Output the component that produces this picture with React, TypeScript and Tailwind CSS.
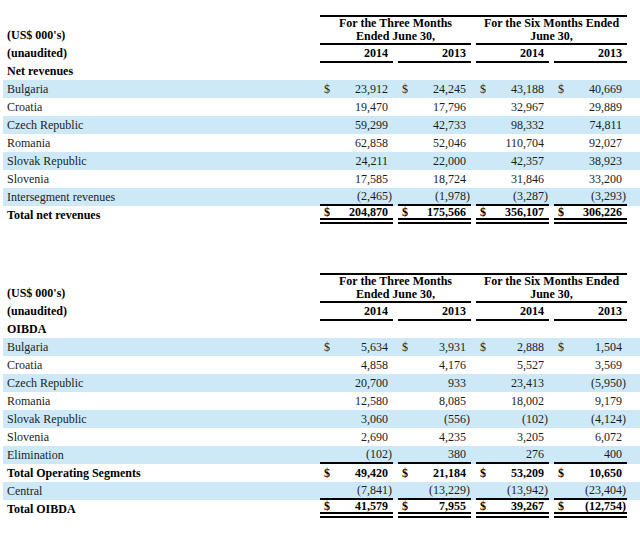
type Row = {
  label: string;
  values: string[];
  bold?: boolean;
  shaded?: boolean;
  dollar?: boolean;
  lineBelow?: boolean;
  doubleBelow?: boolean;
  height?: string;
};

const revenues: Row[] = [
  { label: "Bulgaria", values: ["23,912", "24,245", "43,188", "40,669"], shaded: true, dollar: true },
  { label: "Croatia", values: ["19,470", "17,796", "32,967", "29,889"] },
  { label: "Czech Republic", values: ["59,299", "42,733", "98,332", "74,811"], shaded: true },
  { label: "Romania", values: ["62,858", "52,046", "110,704", "92,027"] },
  { label: "Slovak Republic", values: ["24,211", "22,000", "42,357", "38,923"], shaded: true },
  { label: "Slovenia", values: ["17,585", "18,724", "31,846", "33,200"] },
  { label: "Intersegment revenues", values: ["(2,465)", "(1,978)", "(3,287)", "(3,293)"], shaded: true, lineBelow: true },
  { label: "Total net revenues", values: ["204,870", "175,566", "356,107", "306,226"], bold: true, dollar: true, doubleBelow: true },
];

const oibda: Row[] = [
  { label: "Bulgaria", values: ["5,634", "3,931", "2,888", "1,504"], shaded: true, dollar: true },
  { label: "Croatia", values: ["4,858", "4,176", "5,527", "3,569"] },
  { label: "Czech Republic", values: ["20,700", "933", "23,413", "(5,950)"], shaded: true },
  { label: "Romania", values: ["12,580", "8,085", "18,002", "9,179"] },
  { label: "Slovak Republic", values: ["3,060", "(556)", "(102)", "(4,124)"], shaded: true },
  { label: "Slovenia", values: ["2,690", "4,235", "3,205", "6,072"] },
  { label: "Elimination", values: ["(102)", "380", "276", "400"], shaded: true, lineBelow: true },
  { label: "Total Operating Segments", values: ["49,420", "21,184", "53,209", "10,650"], bold: true, dollar: true },
  { label: "Central", values: ["(7,841)", "(13,229)", "(13,942)", "(23,404)"], shaded: true, lineBelow: true },
  { label: "Total OIBDA", values: ["41,579", "7,955", "39,267", "(12,754)"], bold: true, dollar: true, doubleBelow: true },
];

function Amount({ value }: { value: string }) {
  const negative = value.startsWith("(");
  return <span className={negative ? "" : "pr-[4px]"}>{value}</span>;
}

function TableRow({ row }: { row: Row }) {
  const cellBorder = row.doubleBelow
    ? "border-b-[6px] border-double border-black"
    : row.lineBelow
    ? "border-b-2 border-black"
    : "";
  return (
    <div
      className={`flex ${row.height ?? "h-[18px]"} ${row.shaded ? "bg-[#cde9f8]" : ""} ${
        row.bold ? "font-bold text-black" : "text-[#1c1c1c]"
      }`}
    >
      <div className="flex w-[317px] items-center pl-[4px]">{row.label}</div>
      <div className="flex gap-[5px]">
        {row.values.map((v, i) => (
          <div
            key={i}
            className={`flex w-[73px] items-center justify-between pl-[4px] pr-[1px] ${cellBorder}`}
          >
            <span>{row.dollar ? "$" : ""}</span>
            <Amount value={v} />
          </div>
        ))}
      </div>
    </div>
  );
}

function Table({ title, rows }: { title: string; rows: Row[] }) {
  return (
    <div>
      <div className="flex h-[80px]">
        <div className="flex w-[317px] flex-col justify-end font-bold text-black">
          <div className="flex h-[18px] items-center pl-[4px]">(US$ 000's)</div>
          <div className="flex h-[18px] items-center pl-[4px]">(unaudited)</div>
          <div className="flex h-[18px] items-center pl-[4px]">{title}</div>
        </div>
        <div className="mt-[15px] w-[307px] border-t-2 border-black text-[12px] font-bold leading-[13px] text-black">
          <div className="flex gap-[5px]">
            <div className="w-[151px] border-b-2 border-black text-center">
              For the Three Months
              <br />
              Ended June 30,
            </div>
            <div className="w-[151px] border-b-2 border-black text-center">
              For the Six Months Ended
              <br />
              June 30,
            </div>
          </div>
          <div className="flex gap-[5px]">
            {["2014", "2013", "2014", "2013"].map((y, i) => (
              <div
                key={i}
                className="flex h-[18px] w-[73px] items-center justify-end border-b-2 border-black pr-[5px]"
              >
                {y}
              </div>
            ))}
          </div>
        </div>
      </div>
      {rows.map((r) => (
        <TableRow key={r.label} row={r} />
      ))}
    </div>
  );
}

export default function App() {
  return (
    <div
      className="min-h-[536px] w-[640px] bg-white pl-[3px] text-[12px] leading-[14px]"
      style={{ fontFamily: '"Liberation Serif", "Times New Roman", serif' }}
    >
      <Table title="Net revenues" rows={revenues} />
      <div className="h-[34px]" />
      <Table title="OIBDA" rows={oibda} />
    </div>
  );
}
